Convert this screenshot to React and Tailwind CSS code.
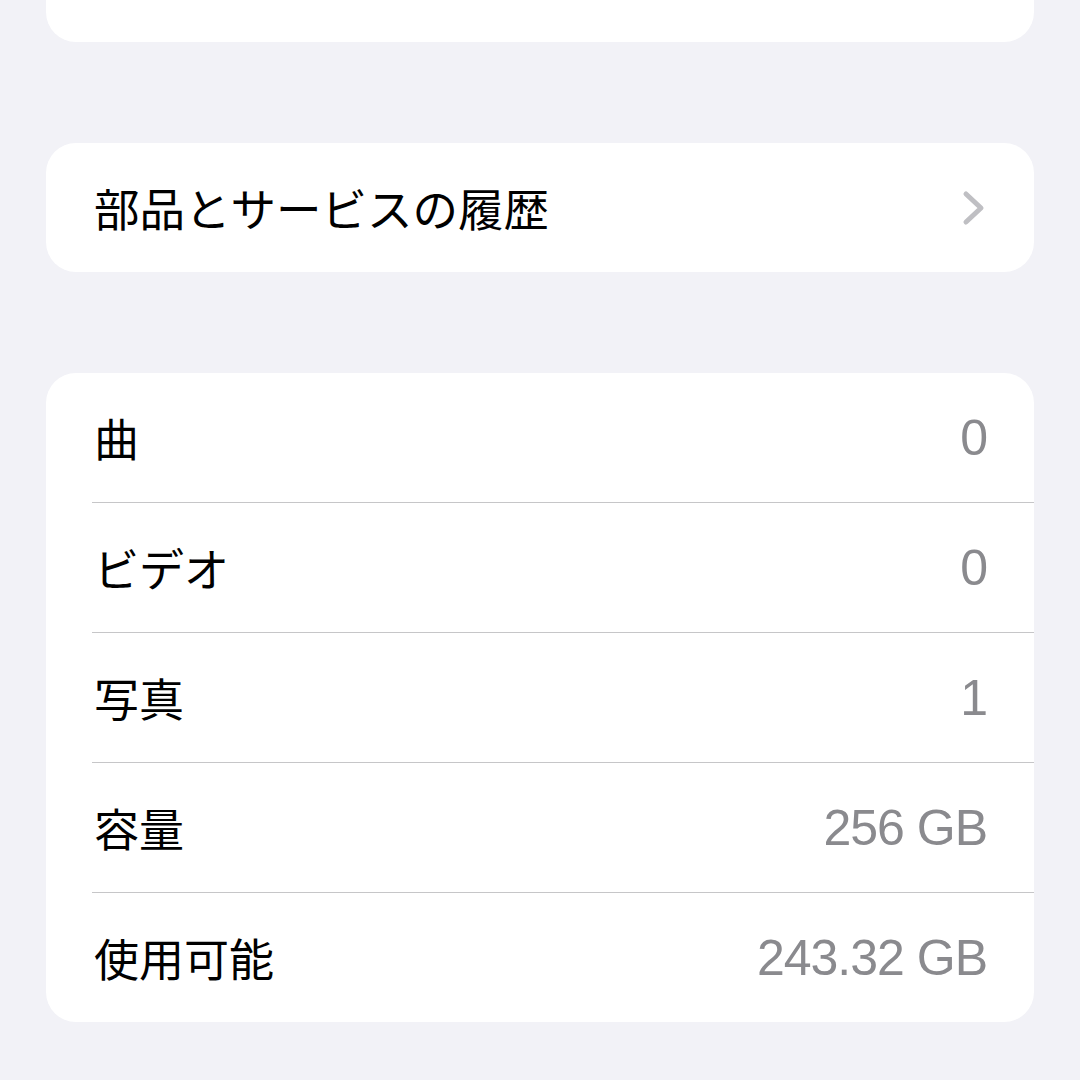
import React from "react";

const jp = { fontFamily: '"Noto Sans CJK JP", "Noto Sans", sans-serif' };
const num = { fontFamily: '"Liberation Sans", Arial, sans-serif' };

function Row({ label, value, last }) {
  return (
    <div className="flex flex-col">
      <div className="flex h-[129px] items-center justify-between pl-[48px] pr-[47px]">
        <span className="text-[45px] leading-none text-black" style={jp}>
          {label}
        </span>
        <span className="text-[50px] leading-none text-[#8a8a8e] tracking-[-1px]" style={num}>
          {value}
        </span>
      </div>
      {!last && <div className="ml-[46px] h-px bg-[#c6c6c8]" />}
    </div>
  );
}

export default function App() {
  const rows = [
    ["曲", "0"],
    ["ビデオ", "0"],
    ["写真", "1"],
    ["容量", "256 GB"],
    ["使用可能", "243.32 GB"],
  ];
  return (
    <div className="min-h-[1080px] w-[1080px] bg-[#f2f2f7] px-[46px] pb-[59px] flex flex-col">
      <div className="h-[42px] w-[988px] rounded-b-[30px] bg-white" />
      <div className="mt-[101px] flex h-[129px] w-[988px] items-center justify-between rounded-[30px] bg-white pl-[48px] pr-[47px]">
        <span className="text-[45.5px] leading-none text-black" style={jp}>
          部品とサービスの履歴
        </span>
        <svg width="24" height="36" viewBox="0 0 24 36" className="mr-[1px]">
          <polyline
            points="4,4 19,18 4,32"
            fill="none"
            stroke="#bfbfc3"
            strokeWidth="5"
            strokeLinecap="round"
            strokeLinejoin="round"
          />
        </svg>
      </div>
      <div className="mt-[101px] w-[988px] rounded-[30px] bg-white overflow-hidden">
        {rows.map(([l, v], i) => (
          <Row key={l} label={l} value={v} last={i === rows.length - 1} />
        ))}
      </div>
    </div>
  );
}
